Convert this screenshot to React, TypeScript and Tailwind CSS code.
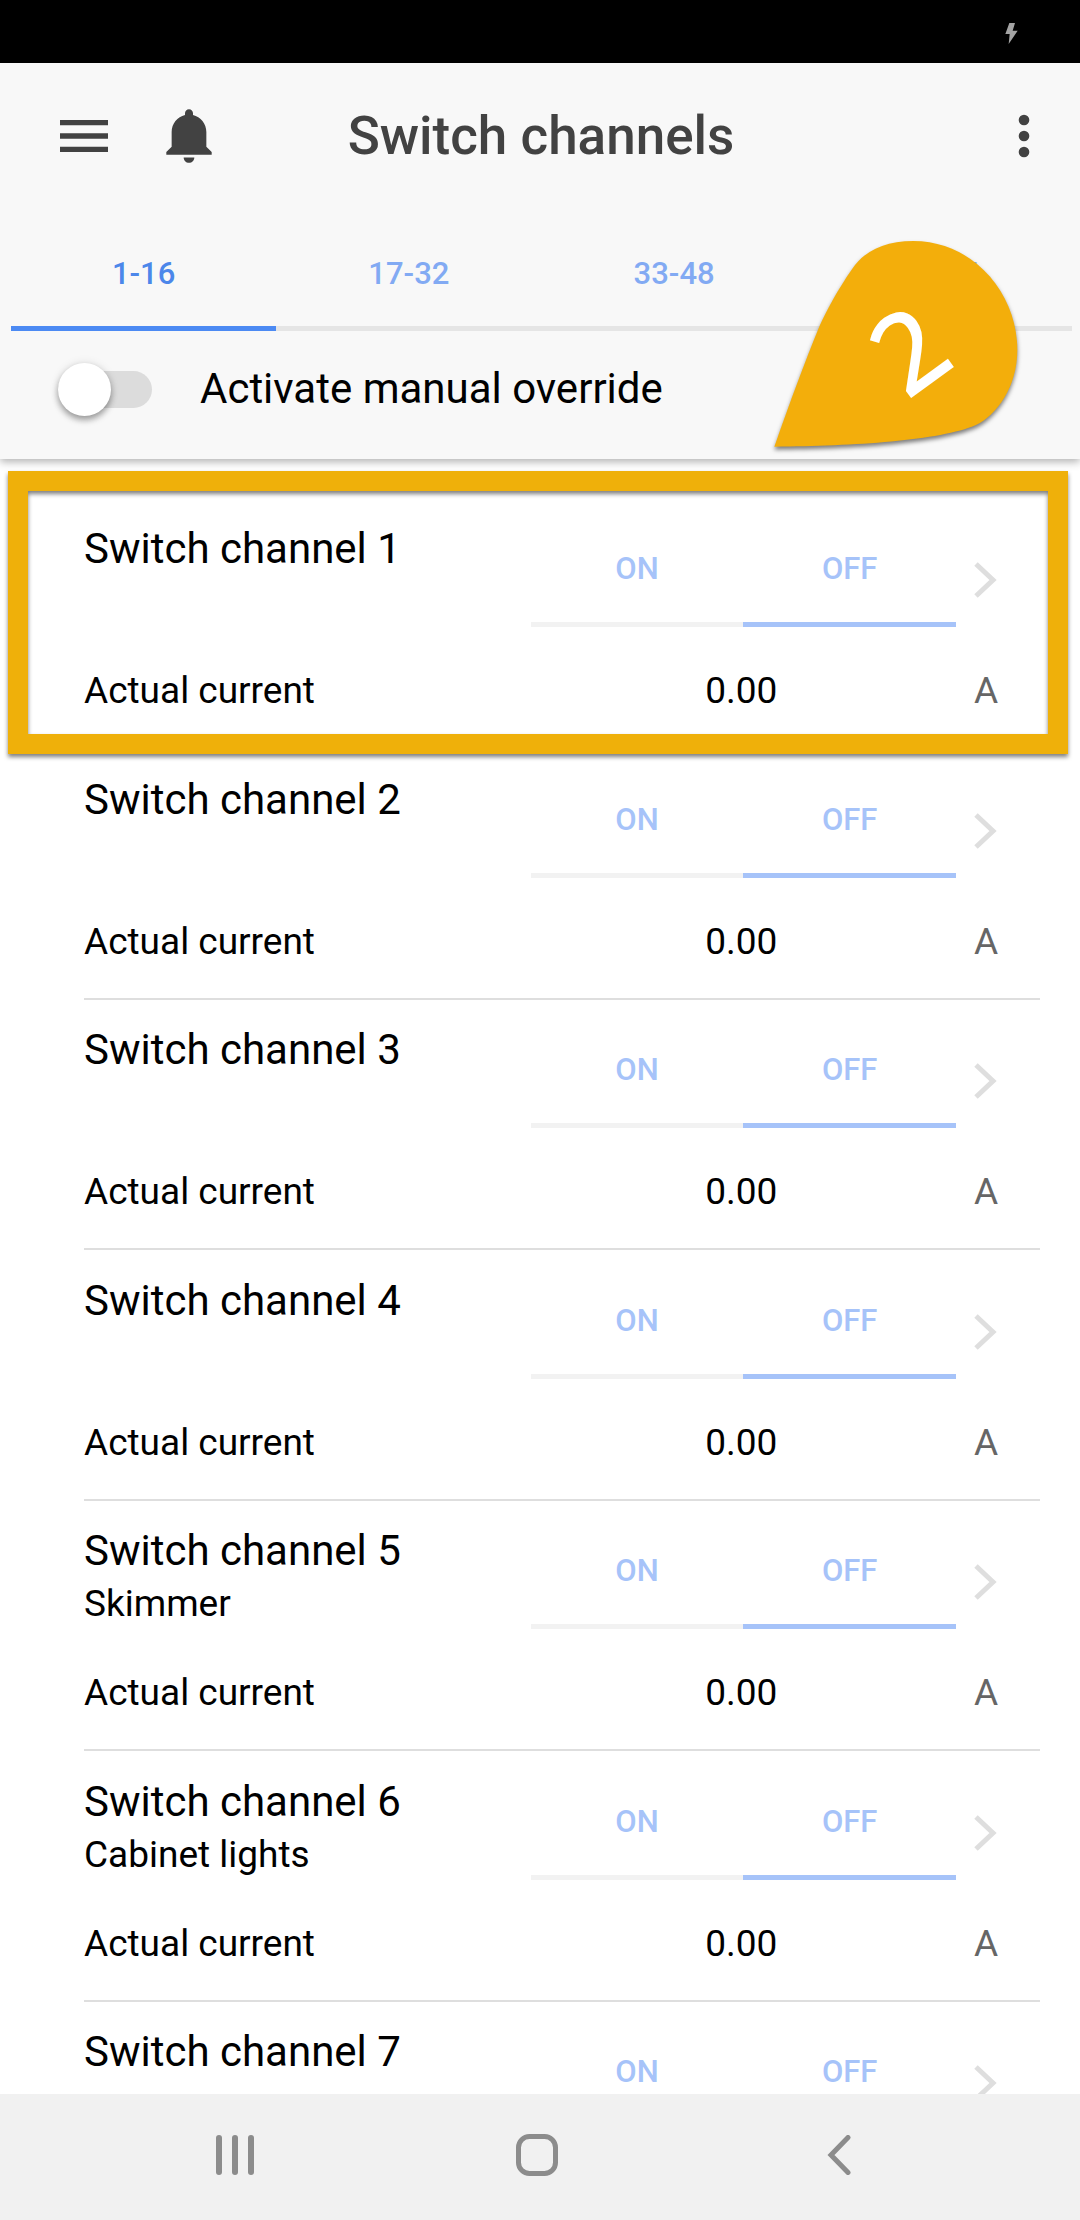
import { useState } from 'react';
import clsx from 'clsx';

interface Channel {
  id: number;
  name?: string;
  current: string;
}

const TABS = ['1-16', '17-32', '33-48', '49-64'];

const CHANNELS: Channel[] = [
  { id: 1, current: '0.00' },
  { id: 2, current: '0.00' },
  { id: 3, current: '0.00' },
  { id: 4, current: '0.00' },
  { id: 5, name: 'Skimmer', current: '0.00' },
  { id: 6, name: 'Cabinet lights', current: '0.00' },
  { id: 7, current: '0.00' },
];

function StatusBar() {
  return (
    <div className="flex h-[63px] shrink-0 items-center justify-end bg-black pr-[62px] pt-1">
      <svg viewBox="0 0 37 63" className="h-[21px] w-[13px] fill-[#a3a3a3]" aria-hidden="true">
        <path d="M12 0H29L22 23H37L10 63L13 33H0Z" />
      </svg>
    </div>
  );
}

function Toolbar() {
  return (
    <div className="relative flex h-[147px] items-center justify-between pb-px pl-[52px] pr-6">
      <div className="flex items-center gap-10">
        <button type="button" aria-label="Menu">
          <svg viewBox="0 0 512 512" className="size-16 fill-[#424242]">
            <path d="M64 384h384v-42.666H64V384zm0-106.666h384v-42.667H64v42.667zM64 128v42.665h384V128H64z" />
          </svg>
        </button>
        <button type="button" aria-label="Notifications">
          <svg viewBox="0 0 512 512" className="size-[66px] fill-[#424242]">
            <path d="M256 464c22.779 0 41.411-18.719 41.411-41.6h-82.823c0 22.881 18.633 41.6 41.412 41.6zm134.589-124.8V224.8c0-63.44-44.516-117.518-103.53-131.041V79.2c0-17.682-13.457-31.2-31.059-31.2S224.94 61.518 224.94 79.2v14.559c-59.015 13.523-103.53 67.601-103.53 131.041v114.4L80 380.8v20.8h352v-20.8l-41.411-41.6z" />
          </svg>
        </button>
      </div>
      <h1 className="pointer-events-none absolute inset-x-0 pb-px pl-0.5 text-center text-[53px] leading-[60px] font-medium text-[#424242]">
        Switch channels
      </h1>
      <button type="button" aria-label="More">
        <svg viewBox="0 0 24 24" className="size-16 fill-[#424242]">
          <circle cx="12" cy="6" r="2" />
          <circle cx="12" cy="12" r="2" />
          <circle cx="12" cy="18" r="2" />
        </svg>
      </button>
    </div>
  );
}

function Tabs() {
  const [active, setActive] = useState(TABS[0]);

  return (
    <div role="tablist" className="flex pt-[10px] pl-[11px] pr-2">
      {TABS.map((tab) => (
        <button
          key={tab}
          type="button"
          role="tab"
          aria-selected={tab === active}
          onClick={() => setActive(tab)}
          className={clsx(
            'h-[111px] flex-1 border-b-[5px] pt-0.5 text-[31px] font-medium',
            tab === active ? 'border-[#4c8af3] text-[#4c87ea]' : 'border-[#e5e5e5] text-[#82aaf3]'
          )}
        >
          {tab}
        </button>
      ))}
    </div>
  );
}

function OverrideToggle() {
  const [enabled, setEnabled] = useState(false);

  return (
    <label className="flex items-center gap-12 pt-8 pb-[43px] pl-[58px]">
      <input
        type="checkbox"
        className="peer sr-only"
        checked={enabled}
        onChange={(e) => setEnabled(e.target.checked)}
      />
      <span className="flex h-[37px] w-[94px] items-center rounded-full bg-[#dcdcdc] peer-checked:justify-end">
        <span className="size-[53px] rounded-full bg-white shadow-[0_4px_6px_rgba(0,0,0,0.35),0_0_10px_rgba(0,0,0,0.1)]" />
      </span>
      <span className="pb-0.5 text-[42px] leading-[51px] text-black">Activate manual override</span>
    </label>
  );
}

function StepMarker() {
  return (
    <svg
      viewBox="90 48 750 660"
      className="absolute top-[173px] right-[60px] h-[220px] w-[250px] overflow-visible drop-shadow-[0_3px_2px_rgba(0,0,0,0.5)]"
    >
      <path
        fill="#f3ae0b"
        d="M103 680C150 545 195 425 235 327C262 262 315 175 345 135C380 90 440 63 520 63C700 63 832 220 832 390C832 500 770 585 708 615C600 662 340 678 103 680Z"
      />
      <text
        transform="translate(501 539) rotate(-36)"
        fontSize="326"
        fill="#fff"
        stroke="#fff"
        strokeWidth="6"
        className="font-['Open_Sans',sans-serif]"
      >
        2
      </text>
    </svg>
  );
}

function ChannelRow({ channel, highlighted }: { channel: Channel; highlighted?: boolean }) {
  const [on, setOn] = useState(false);

  return (
    <li className="relative pr-10 pl-[84px] even:pt-px">
      <div className="border-b-2 border-[#dedede] pt-6 pb-8">
        <div className="grid min-h-[144px] grid-cols-[1.05fr_1fr_84px] items-start">
          <div>
            <h2 className="text-[42px] leading-[52px]">Switch channel {channel.id}</h2>
            {channel.name && <p className="mt-[3px] text-[37px] leading-[48px]">{channel.name}</p>}
          </div>
          <div className="flex text-[31px] font-medium text-[#a6c3f9]">
            <button
              type="button"
              aria-pressed={on}
              onClick={() => setOn(true)}
              className={clsx('h-[104px] flex-1 border-b-[5px] pb-[7px]', on ? 'border-[#a6c3f9]' : 'border-[#f2f2f2]')}
            >
              ON
            </button>
            <button
              type="button"
              aria-pressed={!on}
              onClick={() => setOn(false)}
              className={clsx('h-[104px] flex-1 border-b-[5px] pb-[7px]', on ? 'border-[#f2f2f2]' : 'border-[#a6c3f9]')}
            >
              OFF
            </button>
          </div>
          <a href={`#channel-${channel.id}`} aria-label={`Switch channel ${channel.id}`} className="pt-[39px] pl-[18px]">
            <svg viewBox="0 0 23 36" className="h-9 w-[23px] fill-none stroke-[#dedede] stroke-[5]">
              <path d="M2 2L19 18L2 34" />
            </svg>
          </a>
        </div>
        <div className="grid grid-cols-[1.05fr_1fr_84px] text-[37px] leading-[48px]">
          <span>Actual current</span>
          <span className="pr-1 text-center">{channel.current}</span>
          <span className="pl-[18px] text-[#666]">A</span>
        </div>
      </div>
      {highlighted && (
        <div className="pointer-events-none absolute -top-7 right-3 -bottom-[5px] left-2 border-[20px] border-[#efb00a] drop-shadow-[0_3px_2px_rgba(0,0,0,0.5)]" />
      )}
    </li>
  );
}

function NavigationBar() {
  return (
    <nav className="flex h-[126px] shrink-0 bg-[#f1f1f1] pr-[90px] pb-1 pl-[84px]">
      <button type="button" aria-label="Recent apps" className="flex flex-1 items-center justify-center">
        <svg viewBox="0 0 38 40" className="h-10 w-[38px] fill-[#8c8c8c]">
          <rect x="0" y="0" width="6" height="40" rx="3" />
          <rect x="16" y="0" width="6" height="40" rx="3" />
          <rect x="32" y="0" width="6" height="40" rx="3" />
        </svg>
      </button>
      <button type="button" aria-label="Home" className="flex flex-1 items-center justify-center">
        <svg viewBox="0 0 42 42" className="size-[42px] fill-none stroke-[#8c8c8c] stroke-[5]">
          <rect x="2.5" y="2.5" width="37" height="37" rx="11" />
        </svg>
      </button>
      <button type="button" aria-label="Back" className="flex flex-1 items-center justify-center">
        <svg viewBox="0 0 24 40" className="h-10 w-6 fill-none stroke-[#8c8c8c] stroke-[5]" strokeLinecap="round">
          <path d="M21 2.5L4 20L21 37.5" />
        </svg>
      </button>
    </nav>
  );
}

export default function App() {
  return (
    <div className="flex h-screen flex-col bg-white font-[Roboto,sans-serif] text-black">
      <StatusBar />
      <header className="relative z-10 bg-[#f8f8f8] shadow-[0_3px_8px_rgba(0,0,0,0.3)]">
        <Toolbar />
        <Tabs />
        <OverrideToggle />
        <StepMarker />
      </header>
      <main className="min-h-0 flex-1 overflow-hidden">
        <ul className="pt-10">
          {CHANNELS.map((channel) => (
            <ChannelRow key={channel.id} channel={channel} highlighted={channel.id === 1} />
          ))}
        </ul>
      </main>
      <NavigationBar />
    </div>
  );
}
